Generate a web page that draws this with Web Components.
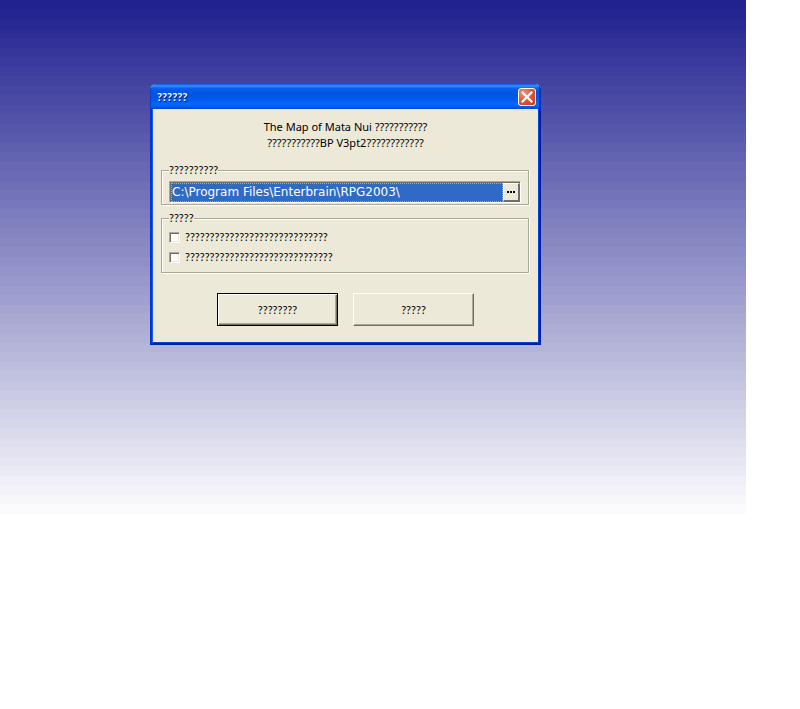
<!DOCTYPE html>
<html lang="en">
<head>
<meta charset="utf-8">
<title>Setup</title>
<style>
  body { margin: 0; background: #fff; color: #000; font: 11px/16px "Noto Sans", "Noto Sans CJK JP", sans-serif; }
</style>
</head>
<body>
<setup-desktop>
  <xp-dialog>
    <span slot="title">??????</span>
    <setup-heading>
      <span>The Map of Mata Nui ???????????</span>
      <span>???????????BP V3pt2????????????</span>
    </setup-heading>
    <group-box tight>
      <span slot="label">??????????</span>
      <path-field value="C:\Program Files\Enterbrain\RPG2003\"></path-field>
    </group-box>
    <group-box>
      <span slot="label">?????</span>
      <check-option>?????????????????????????????</check-option>
      <check-option>??????????????????????????????</check-option>
    </group-box>
    <push-button slot="actions" default>????????</push-button>
    <push-button slot="actions">?????</push-button>
  </xp-dialog>
</setup-desktop>

<script>
const define = (name, markup, setup) => customElements.define(name, class extends HTMLElement {
  connectedCallback() {
    if (this.shadowRoot) return;
    this.attachShadow({ mode: 'open' }).innerHTML = markup;
    if (setup) setup(this, this.shadowRoot);
  }
});

define('setup-desktop', `
  <style>
    :host { display: block; padding-right: 54px; }
    main { box-sizing: border-box; min-height: 514px; padding: 84px 0 0 150px; }
  </style>
  <main><slot></slot></main>`, (host, root) => {
  // Banded vertical fade from navy to white.
  const steps = 54, from = [33, 33, 144], stops = [];
  for (let i = 0; i < steps; i++) {
    const c = from.map(v => Math.round(v + (255 - v) * i / steps)).join(',');
    stops.push(`rgb(${c}) ${100 * i / steps}% ${100 * (i + 1) / steps}%`);
  }
  root.querySelector('main').style.background = `linear-gradient(${stops.join(',')})`;
});

define('xp-dialog', `
  <style>
    :host { display: block; width: 391px; }
    section { border-radius: 6px 6px 0 0; background: #ece9d8; overflow: hidden; }
    header {
      display: flex; align-items: center; justify-content: space-between;
      height: 25px; padding: 0 5px 0 7px; box-sizing: border-box;
      background: linear-gradient(#0a55dc 0, #3b91ff 2px, #0a62ee 4px, #0054e3 8px, #0058ea 15px, #0368ff 20px, #0262fa 22px, #0046cc 25px);
      box-shadow: inset 1px 0 #0842c4, inset -2px 0 #0030b4;
    }
    h1 { margin: 0; font: bold 11px/16px Lato, sans-serif; color: #fff; text-shadow: 1px 1px #0a1883; }
    button {
      display: grid; place-items: center; width: 18px; height: 18px; padding: 0; margin-top: 1px;
      border: 1px solid #fff; border-radius: 3px;
      background: radial-gradient(circle at 30% 25%, #f0957a, #e05533 50%, #c63a18);
    }
    .body {
      display: flex; flex-direction: column; gap: 5px; padding: 10px 9px 17px;
      border: solid; border-width: 0 2px 2px;
      border-color: #0831d9 #001ea0 #001ea0 #0831d9;
      box-shadow: inset 1px 0 #1660ea, inset -1px -1px #0444dc;
      background: #ece9d8;
    }
    footer { display: flex; justify-content: center; gap: 15px; margin-top: 15px; }
  </style>
  <section role="dialog" aria-labelledby="t">
    <header>
      <h1 id="t"><slot name="title"></slot></h1>
      <button aria-label="Close"><svg width="12" height="12" viewBox="0 0 12 12"><path d="M1.5 1.5 10.5 10.5M10.5 1.5 1.5 10.5" stroke="#fff" stroke-width="2.2" stroke-linecap="square"/></svg></button>
    </header>
    <div class="body">
      <slot></slot>
      <footer><slot name="actions"></slot></footer>
    </div>
  </section>`);

define('setup-heading', `
  <style>
    :host { display: flex; flex-direction: column; align-items: center; margin-bottom: 6px; white-space: nowrap; }
  </style>
  <slot></slot>`);

define('group-box', `
  <style>
    :host { display: block; font-family: Lato, sans-serif; }
    fieldset {
      margin: 0 1px 0 0; padding: 3px 7px; min-width: 0;
      border: 1px solid #aca899; box-shadow: 1px 1px #fff, inset 1px 1px #fff;
    }
    :host([tight]) fieldset { padding-bottom: 1px; }
    legend { padding: 0; background: #ece9d8; line-height: 16px; }
  </style>
  <fieldset><legend><slot name="label"></slot></legend><slot></slot></fieldset>`);

define('path-field', `
  <style>
    :host {
      display: flex; height: 19px;
      border: solid; border-width: 1px; border-color: #aca899 #fff #fff #aca899;
      padding: 1px 0 0 1px;
      box-shadow: inset 1px 1px #716f64;
    }
    input {
      flex: 1; min-width: 0; box-sizing: border-box; margin: 0; padding: 0 0 1px;
      border: 1px dotted #f0a030; border-radius: 0; outline: 0;
      background: #316ac5; color: #fff; font: 12px/16px "DejaVu Sans", sans-serif;
    }
    button {
      display: grid; place-items: center; width: 17px; padding: 0; box-sizing: border-box;
      border: solid; border-width: 1px 2px 2px 1px; border-color: #fff #716f64 #716f64 #fff;
      background: #ece9d8;
    }
  </style>
  <input type="text" aria-label="Install folder" spellcheck="false">
  <button aria-label="Browse"><svg width="8" height="2" viewBox="0 0 8 2"><path d="M0 0h2v2H0zM3 0h2v2H3zM6 0h2v2H6z"/></svg></button>`,
  (host, root) => { root.querySelector('input').value = host.getAttribute('value'); });

define('check-option', `
  <style>
    :host { display: block; height: 20px; }
    label { display: flex; align-items: center; gap: 5px; height: 16px; white-space: nowrap; }
    input {
      appearance: none; box-sizing: border-box; width: 11px; height: 11px; margin: 0;
      border: 1px solid; border-color: #aca899 #fff #fff #aca899;
      background: #fff; box-shadow: inset 1px 1px #716f64, inset -1px -1px #ece9d8;
    }
    input:checked { background: #316ac5; }
  </style>
  <label><input type="checkbox"><slot></slot></label>`);

define('push-button', `
  <style>
    :host { display: block; font-family: Lato, sans-serif; }
    button {
      box-sizing: border-box; width: 121px; height: 33px; padding: 0;
      border: 1px solid; border-color: #fff #716f64 #716f64 #fff;
      background: #ece9d8; box-shadow: inset -1px -1px #aca899;
      font: inherit; color: inherit;
    }
    :host([default]) button {
      border-color: #000;
      box-shadow: inset 1px 1px #fff, inset -1px -1px #716f64, inset -2px -2px #aca899;
    }
  </style>
  <button><slot></slot></button>`);
</script>
</body>
</html>
